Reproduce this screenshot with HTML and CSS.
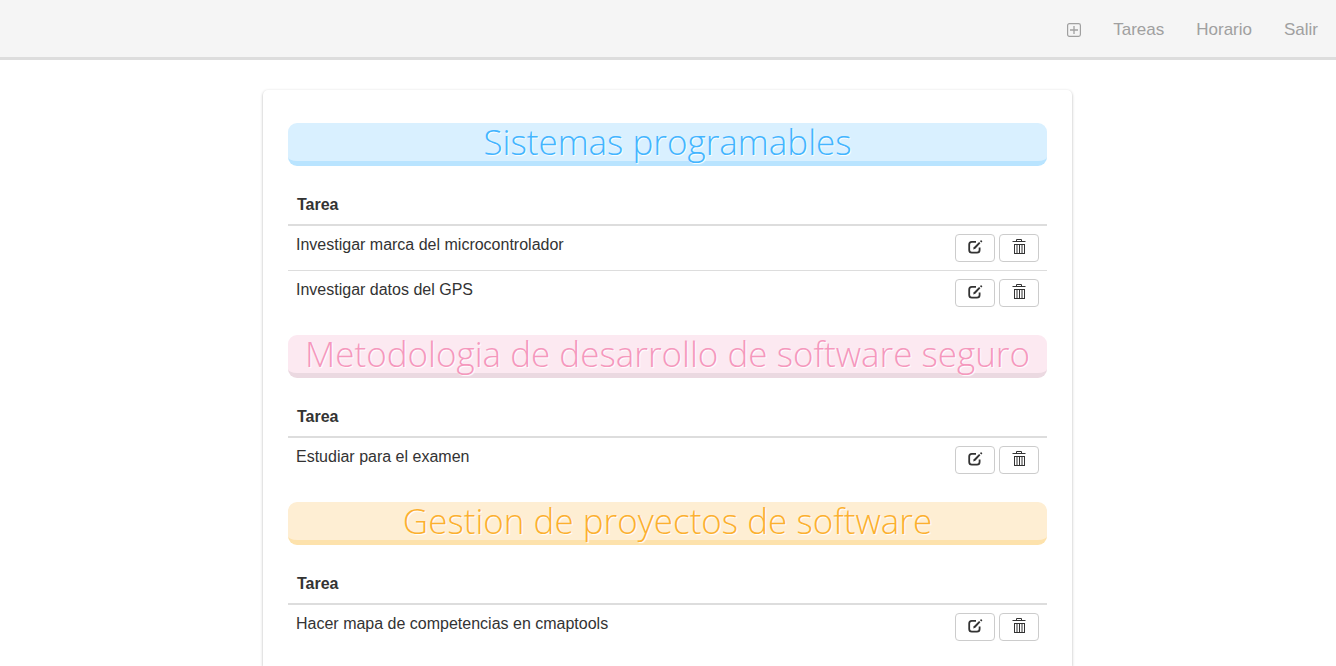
FILE: index.html
```
<!DOCTYPE html>
<html lang="es">
<head>
<meta charset="utf-8">
<title>Tareas</title>
<link rel="stylesheet" href="styles.css">
</head>
<body>
<svg width="0" height="0" class="sprite" aria-hidden="true">
  <symbol id="edit" viewBox="0 0 16 16">
    <path d="M9 2.9H4.8Q2.2 2.9 2.2 5.5V11Q2.2 13.6 4.8 13.6H10Q12.6 13.6 12.6 11V8.6" fill="none" stroke="currentColor" stroke-width="1.8"/>
    <path d="M6.2 10.4L6.8 8.3L12.1 3L13.4 4.3L8.3 9.7Z" fill="currentColor"/>
    <path d="M13 2.2L14.1 1.1L15.4 2.4L14.3 3.5Z" fill="currentColor"/>
  </symbol>
  <symbol id="trash" viewBox="0 0 14 16">
    <path d="M0.5 2.5H13.5M4.5 2.5V0.5H9.5V2.5" fill="none" stroke="currentColor"/>
    <path d="M2 5.5H13M2 14.5H13M2.5 5V15M12.5 5V15M5 5V15M7.5 5V15M10 5V15" fill="none" stroke="currentColor"/>
  </symbol>
</svg>
<nav class="navbar">
  <a class="nav-add" aria-label="Agregar"><svg width="14" height="14" viewBox="0 0 14 14" fill="none" stroke="currentColor"><rect x="0.6" y="0.6" width="12.8" height="12.8" rx="1.8" stroke-width="1.2"/><path d="M7 3V11M3 7H11" stroke-width="1.3"/></svg></a>
  <a>Tareas</a>
  <a>Horario</a>
  <a>Salir</a>
</nav>
<main class="card">
  <section>
    <h1 class="banner blue">Sistemas programables</h1>
    <div class="head">Tarea</div>
    <div class="row"><span>Investigar marca del microcontrolador</span><div class="actions"><button aria-label="Editar"><svg class="edit"><use href="#edit"/></svg></button><button aria-label="Eliminar"><svg class="trash"><use href="#trash"/></svg></button></div></div>
    <div class="row"><span>Investigar datos del GPS</span><div class="actions"><button aria-label="Editar"><svg class="edit"><use href="#edit"/></svg></button><button aria-label="Eliminar"><svg class="trash"><use href="#trash"/></svg></button></div></div>
  </section>
  <section>
    <h1 class="banner pink">Metodologia de desarrollo de software seguro</h1>
    <div class="head">Tarea</div>
    <div class="row"><span>Estudiar para el examen</span><div class="actions"><button aria-label="Editar"><svg class="edit"><use href="#edit"/></svg></button><button aria-label="Eliminar"><svg class="trash"><use href="#trash"/></svg></button></div></div>
  </section>
  <section>
    <h1 class="banner orange">Gestion de proyectos de software</h1>
    <div class="head">Tarea</div>
    <div class="row"><span>Hacer mapa de competencias en cmaptools</span><div class="actions"><button aria-label="Editar"><svg class="edit"><use href="#edit"/></svg></button><button aria-label="Eliminar"><svg class="trash"><use href="#trash"/></svg></button></div></div>
  </section>
</main>
</body>
</html>
```
FILE: styles.css
```
* { box-sizing: border-box; }
body {
  display: flex;
  flex-direction: column;
  margin: 0;
  height: 100vh;
  overflow: hidden;
  background: #fff;
  color: #333;
  font: 16px/22px "Liberation Sans", Arial, sans-serif;
}
.sprite { position: absolute; }
.navbar {
  display: flex;
  flex: none;
  justify-content: flex-end;
  align-items: center;
  gap: 32px;
  height: 60px;
  padding: 2px 18px 0 0;
  background: #f5f5f5;
  border-bottom: 3px solid #ddd;
  color: #a0a0a0;
  font-size: 17px;
}
.nav-add { display: flex; padding-top: 1px; }
.card {
  flex: 1;
  width: 809px;
  min-height: 0;
  margin: 30px 0 0 263px;
  padding: 33px 25px 0;
  border-radius: 5px 5px 0 0;
  background: #fff;
  box-shadow: 0 1px 3px rgba(0, 0, 0, .3);
}
section { margin-bottom: 20px; }
section:last-child { margin-bottom: 0; }
.banner {
  height: 43px;
  margin: 0 0 18px;
  border-bottom: 5px solid;
  border-radius: 9px;
  font: 300 35px/38px "Open Sans", sans-serif;
  text-align: center;
  white-space: nowrap;
  text-shadow: 1px 1px 1px #fff;
}
.blue { color: #43b5ff; background: #d9f0ff; border-color: #b9e4ff; }
.pink { color: #f598bd; background: #fce9f1; border-color: #ebd9e1; }
.orange { color: #fcb02f; background: #feeed3; border-color: #fde2ac; }
.head {
  height: 42px;
  padding: 10px 9px 0;
  border-bottom: 2px solid #ddd;
  font-weight: 700;
}
.row {
  display: flex;
  justify-content: space-between;
  height: 44px;
  padding: 8px;
}
.row + .row { height: 45px; border-top: 1px solid #ddd; }
.actions { display: flex; gap: 4px; }
button {
  display: flex;
  justify-content: center;
  width: 40px;
  height: 28px;
  padding: 4px 0 0;
  border: 1px solid #ccc;
  border-radius: 4px;
  background: #fff;
  color: #333;
}
.edit { width: 16px; height: 16px; }
.trash { width: 14px; height: 16px; }
```
